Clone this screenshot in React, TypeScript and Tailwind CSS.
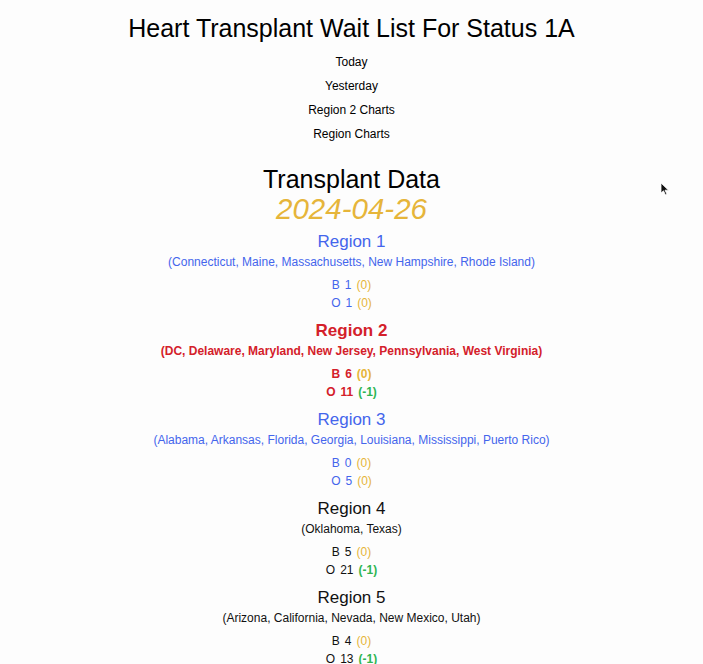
import React from "react";

// Heart transplant wait list — status 1A summary page

type Delta = number;

interface Region {
  id: number;
  states: string[];
  b: number;
  bDelta: Delta;
  o: number;
  oDelta: Delta;
  tone: "blue" | "red" | "black";
}

const regions: Region[] = [
  { id: 1, states: ["Connecticut", "Maine", "Massachusetts", "New Hampshire", "Rhode Island"], b: 1, bDelta: 0, o: 1, oDelta: 0, tone: "blue" },
  { id: 2, states: ["DC", "Delaware", "Maryland", "New Jersey", "Pennsylvania", "West Virginia"], b: 6, bDelta: 0, o: 11, oDelta: -1, tone: "red" },
  { id: 3, states: ["Alabama", "Arkansas", "Florida", "Georgia", "Louisiana", "Mississippi", "Puerto Rico"], b: 0, bDelta: 0, o: 5, oDelta: 0, tone: "blue" },
  { id: 4, states: ["Oklahoma", "Texas"], b: 5, bDelta: 0, o: 21, oDelta: -1, tone: "black" },
  { id: 5, states: ["Arizona", "California", "Nevada", "New Mexico", "Utah"], b: 4, bDelta: 0, o: 13, oDelta: -1, tone: "black" },
];

const toneClass = {
  blue: "text-[#4465ec]",
  red: "text-[#d4202a] font-bold",
  black: "text-[#111]",
};

function DeltaText({ value }: { value: Delta }) {
  const color = value === 0 ? "text-[#e6b53a]" : value < 0 ? "text-[#2fb552] font-semibold" : "text-[#d4202a]";
  return <span className={color}>({value})</span>;
}

function RegionBlock({ region }: { region: Region }) {
  const tone = toneClass[region.tone];
  return (
    <div className={`flex flex-col items-center mb-[8px] ${tone}`}>
      <h3 className="text-[17px] leading-[22px]">Region {region.id}</h3>
      <p className="text-[12px] leading-[18px]">({region.states.join(", ")})</p>
      <div className="mt-[5px] text-[12px] leading-[18px] flex flex-col items-center">
        <div className="flex gap-[5px]">
          <span>B</span>
          <span>{region.b}</span>
          <DeltaText value={region.bDelta} />
        </div>
        <div className="flex gap-[5px]">
          <span>O</span>
          <span>{region.o}</span>
          <DeltaText value={region.oDelta} />
        </div>
      </div>
    </div>
  );
}

export default function App() {
  return (
    <div
      className="relative min-h-screen bg-[#fdfdfd] text-black flex flex-col items-center overflow-hidden"
      style={{ fontFamily: "'Liberation Sans', Arial, sans-serif" }}
    >
      <h1 className="mt-[12px] text-[25px] leading-[32px]">Heart Transplant Wait List For Status 1A</h1>

      <nav className="mt-[6px] flex flex-col items-center text-[12px] leading-[24px]">
        <a>Today</a>
        <a>Yesterday</a>
        <a>Region 2 Charts</a>
        <a>Region Charts</a>
      </nav>

      <h2 className="mt-[18px] text-[25px] leading-[30px]">Transplant Data</h2>
      <div className="text-[29.5px] leading-[30px] italic text-[#e6b53a]">2024-04-26</div>

      <div className="mt-[7px] flex flex-col items-center">
        {regions.map((r) => (
          <RegionBlock key={r.id} region={r} />
        ))}
      </div>

      {/* mouse pointer left in the capture */}
      <svg className="absolute left-[660px] top-[182px]" width="10" height="14" viewBox="0 0 10 14">
        <path d="M1 1 L1 11 L3.5 8.8 L5.5 13 L7 12.3 L5 8.2 L8.5 8.2 Z" fill="#111" stroke="#fff" strokeWidth="0.8" />
      </svg>
    </div>
  );
}
